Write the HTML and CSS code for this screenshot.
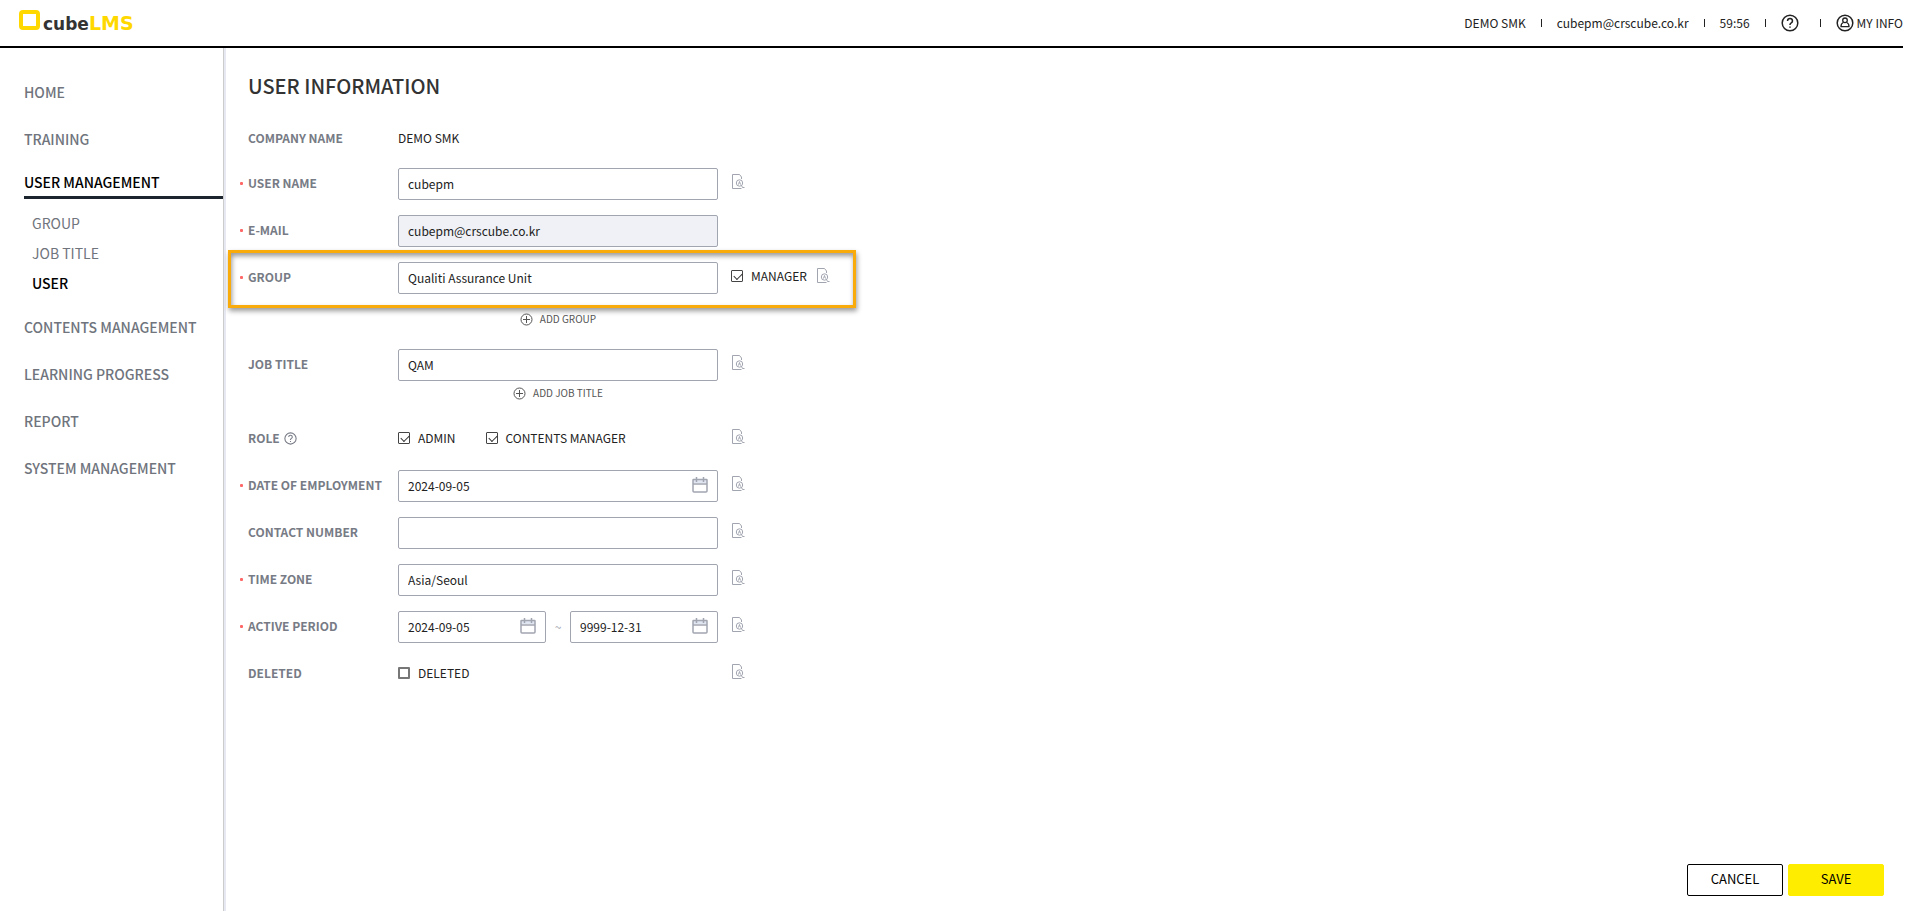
FILE: index.html
```html
<!DOCTYPE html>
<html lang="en">

<head>
  <meta charset="UTF-8">
  <meta name="viewport" content="width=device-width, initial-scale=1.0">
  <title>cubeLMS - User Information</title>
  <link rel="stylesheet" href="styles.css">
</head>

<body>
  <!-- Shared icons -->
  <svg class="sprite" aria-hidden="true">
    <symbol id="icon-history" viewBox="0 0 13 16">
      <path d="M9.500 5V3L7.500 .5H.5v14H9.500" fill="none" stroke="currentColor" />
      <circle cx="7.500" cy="9" r="3.200" fill="none" stroke="currentColor" />
      <path d="M6.500 10.500l1-3 1 3M9.500 11.500l1 2h2" fill="none" stroke="currentColor" />
    </symbol>
    <symbol id="icon-calendar" viewBox="0 0 16 16">
      <path d="M1 3h14v3H1z" fill="#dfe5f1" />
      <path d="M1.500 2.500h13q.5 0 .5.500v11q0 1-1 1H2q-1 0-1-1V3q0-.5.500-.5zM1 7h14M4.500 0v5M11.500 0v5" fill="none" stroke="currentColor" stroke-width="1.500" />
    </symbol>
    <symbol id="icon-plus" viewBox="0 0 13 13">
      <circle cx="6.500" cy="6.500" r="5.500" fill="none" stroke="currentColor" />
      <path d="M6.500 3v7M3 6.500h7" stroke="currentColor" />
    </symbol>
    <symbol id="icon-help" viewBox="0 0 18 18">
      <circle cx="9" cy="9" r="7.800" fill="none" stroke="currentColor" stroke-width="1.500" />
      <path d="M6.500 7q.1-2.400 2.500-2.400T11.500 7q0 1.100-1.200 1.800T9 10.600v.5M9 12.400v1.400" fill="none" stroke="currentColor" stroke-width="1.500" />
    </symbol>
    <symbol id="icon-user" viewBox="0 0 18 18">
      <circle cx="9" cy="9" r="7.800" fill="none" stroke="currentColor" stroke-width="1.500" />
      <circle cx="9" cy="6.300" r="2.300" fill="none" stroke="currentColor" stroke-width="1.300" />
      <path d="M7.300 8.500Q5 9.300 5 12.700h8Q13 9.300 10.700 8.500" fill="none" stroke="currentColor" stroke-width="1.300" />
    </symbol>
  </svg>

  <header class="header">
    <a class="logo" href="#">
      <svg class="logo-mark" viewBox="0 0 21 20"><rect x="2" y="2" width="17" height="16" rx="2" fill="none" stroke="#ffd800" stroke-width="4" /></svg>
      <span class="logo-text"><span class="logo-cube">cube</span><span class="logo-lms">LMS</span></span>
    </a>
    <ul class="utils">
      <li>DEMO SMK</li>
      <li>cubepm@crscube.co.kr</li>
      <li>59:56</li>
      <li><button type="button" class="icon-button" aria-label="Help"><svg class="icon-round"><use href="#icon-help" /></svg></button></li>
      <li><a href="#"><svg class="icon-round"><use href="#icon-user" /></svg>MY INFO</a></li>
    </ul>
  </header>

  <div class="layout">
    <nav class="sidebar">
      <ul class="menu">
        <li><a href="#">HOME</a></li>
        <li><a href="#">TRAINING</a></li>
        <li class="active">
          <a href="#">USER MANAGEMENT</a>
          <ul class="submenu">
            <li><a href="#">GROUP</a></li>
            <li><a href="#">JOB TITLE</a></li>
            <li><a class="current" href="#">USER</a></li>
          </ul>
        </li>
        <li><a href="#">CONTENTS MANAGEMENT</a></li>
        <li><a href="#">LEARNING PROGRESS</a></li>
        <li><a href="#">REPORT</a></li>
        <li><a href="#">SYSTEM MANAGEMENT</a></li>
      </ul>
    </nav>

    <main class="content">
      <h1>USER INFORMATION</h1>

      <form class="user-form">
        <div class="row row-text">
          <span class="label">COMPANY NAME</span>
          <span class="field value">DEMO SMK</span>
        </div>
        <div class="row">
          <label class="label required" for="userName">USER NAME</label>
          <input class="field input" type="text" id="userName" value="cubepm">
          <button type="button" class="history" aria-label="History"><svg><use href="#icon-history" /></svg></button>
        </div>
        <div class="row">
          <label class="label required" for="email">E-MAIL</label>
          <input class="field input" type="text" id="email" value="cubepm@crscube.co.kr" readonly>
        </div>
        <div class="row highlight">
          <label class="label required" for="group">GROUP</label>
          <input class="field input" type="text" id="group" value="Qualiti Assurance Unit">
          <label class="check"><input type="checkbox" checked>MANAGER</label>
          <button type="button" class="history" aria-label="History"><svg><use href="#icon-history" /></svg></button>
        </div>
        <div class="add-row">
          <button type="button" class="add"><svg><use href="#icon-plus" /></svg>ADD GROUP</button>
        </div>
        <div class="row">
          <label class="label" for="jobTitle">JOB TITLE</label>
          <input class="field input" type="text" id="jobTitle" value="QAM">
          <button type="button" class="history" aria-label="History"><svg><use href="#icon-history" /></svg></button>
        </div>
        <div class="add-row add-job">
          <button type="button" class="add"><svg><use href="#icon-plus" /></svg>ADD JOB TITLE</button>
        </div>
        <div class="row">
          <span class="label">ROLE <svg class="icon-hint"><use href="#icon-help" /></svg></span>
          <div class="field checks">
            <label class="check"><input type="checkbox" checked>ADMIN</label>
            <label class="check"><input type="checkbox" checked>CONTENTS MANAGER</label>
          </div>
          <button type="button" class="history" aria-label="History"><svg><use href="#icon-history" /></svg></button>
        </div>
        <div class="row">
          <label class="label required" for="employment">DATE OF EMPLOYMENT</label>
          <div class="field date">
            <input class="input" type="text" id="employment" value="2024-09-05">
            <svg><use href="#icon-calendar" /></svg>
          </div>
          <button type="button" class="history" aria-label="History"><svg><use href="#icon-history" /></svg></button>
        </div>
        <div class="row">
          <label class="label" for="contact">CONTACT NUMBER</label>
          <input class="field input" type="text" id="contact">
          <button type="button" class="history" aria-label="History"><svg><use href="#icon-history" /></svg></button>
        </div>
        <div class="row">
          <label class="label required" for="timeZone">TIME ZONE</label>
          <input class="field input" type="text" id="timeZone" value="Asia/Seoul">
          <button type="button" class="history" aria-label="History"><svg><use href="#icon-history" /></svg></button>
        </div>
        <div class="row">
          <label class="label required" for="periodFrom">ACTIVE PERIOD</label>
          <div class="field period">
            <div class="date">
              <input class="input" type="text" id="periodFrom" value="2024-09-05">
              <svg><use href="#icon-calendar" /></svg>
            </div>
            <span class="tilde">~</span>
            <div class="date">
              <input class="input" type="text" id="periodTo" aria-label="Active period end" value="9999-12-31">
              <svg><use href="#icon-calendar" /></svg>
            </div>
          </div>
          <button type="button" class="history" aria-label="History"><svg><use href="#icon-history" /></svg></button>
        </div>
        <div class="row">
          <span class="label">DELETED</span>
          <div class="field checks">
            <label class="check"><input type="checkbox">DELETED</label>
          </div>
          <button type="button" class="history" aria-label="History"><svg><use href="#icon-history" /></svg></button>
        </div>

        <div class="actions">
          <button type="button" class="btn">CANCEL</button>
          <button type="submit" class="btn btn-save">SAVE</button>
        </div>
      </form>
    </main>
  </div>
</body>

</html>
```
FILE: styles.css
```css
* {
  margin: 0;
  padding: 0;
  box-sizing: border-box;
}

body {
  display: flex;
  flex-direction: column;
  min-height: 100vh;
  padding-right: 5px;
  font-family: "Noto Sans CJK KR", sans-serif;
  font-size: 12px;
  line-height: 18px;
  color: #222;
  background: #fff;
}

ul {
  list-style: none;
}

a {
  color: inherit;
  text-decoration: none;
}

button,
input {
  font: inherit;
  color: inherit;
}

button {
  border: none;
  background: none;
  cursor: pointer;
}

svg {
  display: block;
}

.sprite {
  position: absolute;
  width: 0;
  height: 0;
}

/* Header */
.header {
  display: flex;
  justify-content: space-between;
  align-items: center;
  height: 48px;
  padding-left: 19px;
  border-bottom: 2px solid #000;
}

.logo {
  display: flex;
  align-items: flex-start;
  font-family: "DejaVu Sans", sans-serif;
  font-weight: bold;
  line-height: 20px;
}

.logo-mark {
  width: 21px;
  height: 20px;
  margin-right: 3px;
}

.logo-text {
  padding-top: 3px;
}

.logo-cube {
  font-size: 17px;
  color: #333;
}

.logo-lms {
  font-size: 19px;
  color: #ffd800;
}

.utils {
  display: flex;
  align-items: center;
}

.utils li {
  display: flex;
  align-items: center;
}

.utils li + li::before {
  content: "";
  width: 1px;
  height: 8px;
  margin: 0 15px;
  background: #222;
}

.utils a {
  display: flex;
  align-items: center;
  gap: 3px;
}

.icon-button {
  padding-right: 6px;
}

.icon-round {
  width: 18px;
  height: 18px;
}

/* Sidebar */
.layout {
  display: flex;
  flex: 1;
}

.sidebar {
  width: 224px;
  padding: 33px 0 0 24px;
  border-right: 1px solid #ccc;
  box-shadow: 2px 0 0 #e6e9f2;
}

.menu {
  display: flex;
  flex-direction: column;
  gap: 25px;
  font-size: 14px;
  font-weight: 500;
  line-height: 22px;
  color: #6f747d;
}

.menu a {
  display: block;
}

.active {
  margin: -4px 0 -7px;
}

.active > a {
  padding-bottom: 3px;
  border-bottom: 3px solid #1c242e;
  color: #000;
}

.submenu {
  padding: 9px 0 0 8px;
  font-weight: 400;
  line-height: 30px;
}

.submenu .current {
  font-weight: 500;
  color: #000;
}

/* User form */
.content {
  display: flex;
  flex-direction: column;
  flex: 1;
  padding: 23px 19px 15px 24px;
}

h1 {
  margin-bottom: 22px;
  font-size: 20px;
  font-weight: 500;
  line-height: 30px;
  color: #333;
}

.user-form {
  display: flex;
  flex-direction: column;
  flex: 1;
}

.row {
  display: flex;
  align-items: center;
  height: 32px;
  margin-bottom: 15px;
}

.row-text {
  margin-bottom: 13px;
}

.label {
  position: relative;
  display: flex;
  align-items: center;
  gap: 4px;
  width: 150px;
  padding-bottom: 2px;
  font-weight: 700;
  color: #777b85;
}

.required::before {
  content: "";
  position: absolute;
  left: -8px;
  width: 3px;
  height: 3px;
  border-radius: 1px;
  background: #f66;
}

.field {
  width: 320px;
}

.value {
  padding-bottom: 2px;
}

.input {
  height: 32px;
  padding: 0 9px 2px;
  border: 1px solid #a1a5b0;
  border-radius: 2px;
  outline: none;
  background: #fff;
}

.input:focus {
  border-color: #555;
}

.input[readonly] {
  background: #eff1f6;
}

.history {
  width: 13px;
  height: 16px;
  margin: 0 0 4px 14px;
  color: #a1a5b0;
}

.history svg {
  width: 13px;
  height: 16px;
}

/* Orange frame around the group row */
.highlight {
  align-self: flex-start;
  height: 58px;
  margin: -12px 0 2px -20px;
  padding: 0 23px 2px 17px;
  border: 3px solid #faab0c;
  box-shadow: 1px 3px 5px rgba(0, 0, 0, 0.4), inset 1px 3px 5px rgba(0, 0, 0, 0.4);
}

.highlight .check {
  margin: 0 -4px 2px 13px;
}

.add-row {
  display: flex;
  justify-content: center;
  width: 320px;
  margin: 0 0 21px 150px;
}

.add-job {
  margin-top: -12px;
}

.add {
  display: flex;
  align-items: center;
  gap: 7px;
  font-size: 10px;
  color: #555;
}

.add svg {
  width: 13px;
  height: 13px;
}

.icon-hint {
  width: 13px;
  height: 13px;
}

.checks {
  display: flex;
  gap: 30px;
}

.check {
  display: flex;
  align-items: center;
  gap: 8px;
  padding-bottom: 2px;
}

.check input {
  appearance: none;
  width: 12px;
  height: 12px;
  border: 2px solid #777;
  border-radius: 1px;
}

.check input:checked {
  border: 1px solid #444;
}

.check input:checked::before {
  content: "";
  display: block;
  width: 7px;
  height: 4px;
  margin: 2px 0 0 2px;
  border: solid #333;
  border-width: 0 0 1px 1px;
  transform: rotate(-45deg);
}

.date {
  display: flex;
  position: relative;
}

.date .input {
  width: 100%;
}

/* Calendar icon sits over the input */
.date svg {
  position: absolute;
  top: 7px;
  right: 10px;
  width: 16px;
  height: 16px;
  color: #a1a5b0;
}

.period {
  display: flex;
  align-items: center;
}

.period .date {
  flex: 1;
}

.tilde {
  width: 24px;
  text-align: center;
  color: #a1a5b0;
}

.actions {
  display: flex;
  justify-content: flex-end;
  gap: 5px;
  margin-top: auto;
}

.btn {
  width: 96px;
  height: 32px;
  padding-bottom: 2px;
  border: 1px solid #000;
  border-radius: 2px;
  font-size: 13px;
  color: #000;
}

.btn-save {
  border-color: #ffed00;
  background: #ffed00;
}
```
